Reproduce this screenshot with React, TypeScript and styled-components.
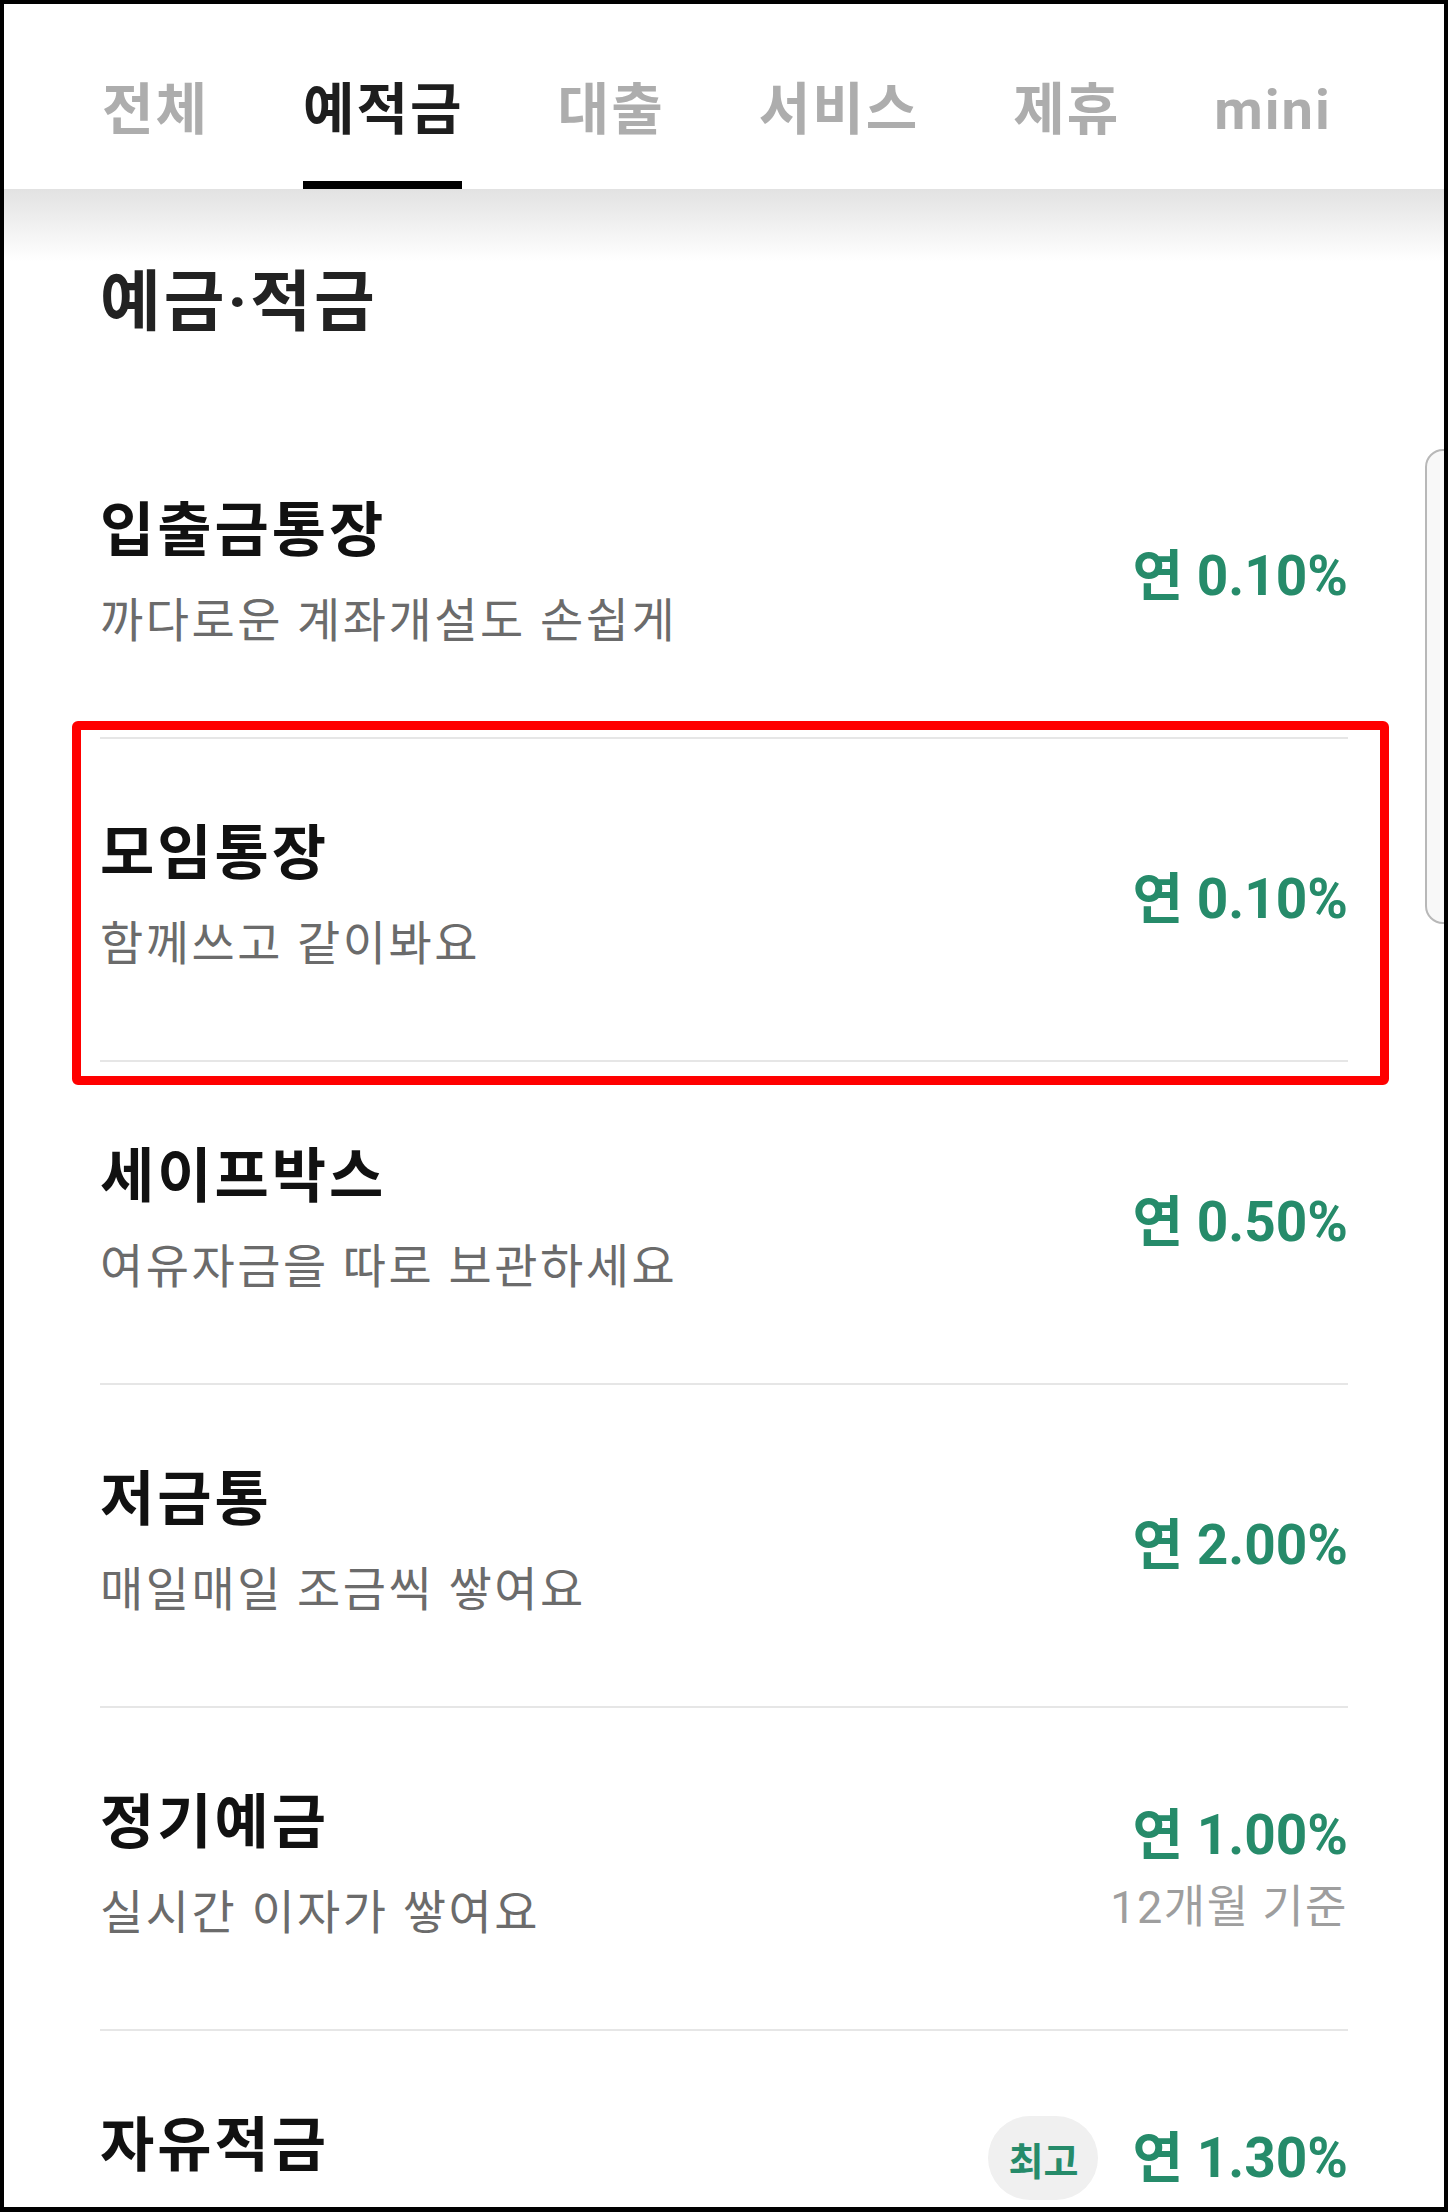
import styled, { createGlobalStyle } from "styled-components";

const GlobalStyle = createGlobalStyle`
  html, body {
    margin: 0;
    padding: 0;
    background: #000;
  }
  body {
    font-family: Roboto, "Noto Sans CJK KR", sans-serif;
  }
  * {
    box-sizing: border-box;
  }
`;

type Product = {
  title: string;
  sub: string;
  rate: string;
  note?: string;
  badge?: string;
  highlight?: boolean;
};

const tabs = ["전체", "예적금", "대출", "서비스", "제휴", "mini"];

// the last row is cut off by the screen edge, its second lines stay empty
const products: Product[] = [
  { title: "입출금통장", sub: "까다로운 계좌개설도 손쉽게", rate: "0.10%" },
  { title: "모임통장", sub: "함께쓰고 같이봐요", rate: "0.10%", highlight: true },
  { title: "세이프박스", sub: "여유자금을 따로 보관하세요", rate: "0.50%" },
  { title: "저금통", sub: "매일매일 조금씩 쌓여요", rate: "2.00%" },
  { title: "정기예금", sub: "실시간 이자가 쌓여요", rate: "1.00%", note: "12개월 기준" },
  { title: "자유적금", sub: "", rate: "1.30%", note: "", badge: "최고" },
];

function App() {
  return (
    <>
      <GlobalStyle />
      <Screen>
        <TabBar>
          {tabs.map((t) => (
            <Tab key={t} $active={t === "예적금"}>
              {t}
            </Tab>
          ))}
        </TabBar>

        <Content>
          <Heading>예금·적금</Heading>
          <List>
            {products.map((p) => (
              <Row key={p.title} $highlight={p.highlight}>
                <Info>
                  <Title>{p.title}</Title>
                  <Sub>{p.sub}</Sub>
                </Info>
                <RateBox>
                  <RateLine>
                    {p.badge && <Badge>{p.badge}</Badge>}
                    <Rate>연 {p.rate}</Rate>
                  </RateLine>
                  {p.note !== undefined && <Note>{p.note}</Note>}
                </RateBox>
              </Row>
            ))}
          </List>
        </Content>

        <EdgeHandle />
      </Screen>
    </>
  );
}

const Screen = styled.div`
  position: relative;
  width: 1448px;
  height: 2212px;
  border-style: solid;
  border-color: #000;
  border-width: 4px 4px 5px 4px;
  background: #fff;
  overflow: hidden;
`;

const TabBar = styled.nav`
  position: relative;
  z-index: 2;
  height: 185px;
  display: flex;
  gap: 94px;
  padding-left: 98px;
  background: #fff;

  &::after {
    content: "";
    position: absolute;
    left: 0;
    right: 0;
    top: 100%;
    height: 72px;
    background: linear-gradient(#e2e2e2, rgba(255, 255, 255, 0));
    pointer-events: none;
  }
`;

const Tab = styled.div<{ $active?: boolean }>`
  position: relative;
  height: 100%;
  padding-top: 78px;
  font-size: 56px;
  line-height: 1;
  font-weight: 700;
  letter-spacing: 2px;
  color: ${(p) => (p.$active ? "#1e1e1e" : "#adadad")};
  white-space: nowrap;

  &::after {
    content: "";
    position: absolute;
    left: 0;
    right: 2px;
    bottom: 0;
    height: 8px;
    background: ${(p) => (p.$active ? "#000" : "transparent")};
  }
`;

const Content = styled.div`
  padding: 0 96px;
`;

const Heading = styled.h1`
  margin: 0;
  height: 227px;
  display: flex;
  align-items: center;
  font-size: 66px;
  font-weight: 700;
  line-height: 1;
  letter-spacing: 3px;
  color: #222;
`;

const List = styled.div`
  display: flex;
  flex-direction: column;
`;

const Row = styled.div<{ $highlight?: boolean }>`
  position: relative;
  box-sizing: content-box;
  min-height: 321px;
  display: flex;
  align-items: center;
  justify-content: space-between;

  & + & {
    border-top: 2px solid #e6e6e6;
  }

  &::after {
    content: "";
    display: ${(p) => (p.$highlight ? "block" : "none")};
    position: absolute;
    top: -18px;
    bottom: -25px;
    left: -28px;
    right: -41px;
    border: 9px solid #ff0000;
    border-radius: 6px;
    pointer-events: none;
  }
`;

const Info = styled.div`
  display: flex;
  flex-direction: column;
  padding-bottom: 8px;
`;

const Title = styled.div`
  font-size: 59px;
  font-weight: 700;
  line-height: 1;
  letter-spacing: 3px;
  color: #111;
`;

const Sub = styled.div`
  margin-top: 37px;
  min-height: 1em;
  font-size: 47px;
  line-height: 1;
  letter-spacing: 2.5px;
  color: #6b6b6b;
`;

const RateBox = styled.div`
  display: flex;
  flex-direction: column;
  align-items: flex-end;
`;

const RateLine = styled.div`
  display: flex;
  align-items: center;
  gap: 34px;
`;

const Rate = styled.div`
  font-size: 55px;
  font-weight: 700;
  line-height: 1;
  color: #268b6a;
  white-space: nowrap;
`;

const Note = styled.div`
  margin-top: 22px;
  min-height: 1em;
  font-size: 45px;
  line-height: 1;
  letter-spacing: 1.5px;
  color: #9e9e9e;
  white-space: nowrap;
`;

const Badge = styled.div`
  width: 110px;
  height: 84px;
  border-radius: 42px;
  background: #f0f0f0;
  display: flex;
  align-items: center;
  justify-content: center;
  font-size: 38px;
  font-weight: 700;
  color: #268b6a;
`;

const EdgeHandle = styled.div`
  position: absolute;
  z-index: 3;
  top: 445px;
  left: 1421px;
  width: 60px;
  height: 475px;
  border: 2px solid #b8b8b8;
  border-radius: 18px;
  background: #f8f8f8;
`;

export default App;
